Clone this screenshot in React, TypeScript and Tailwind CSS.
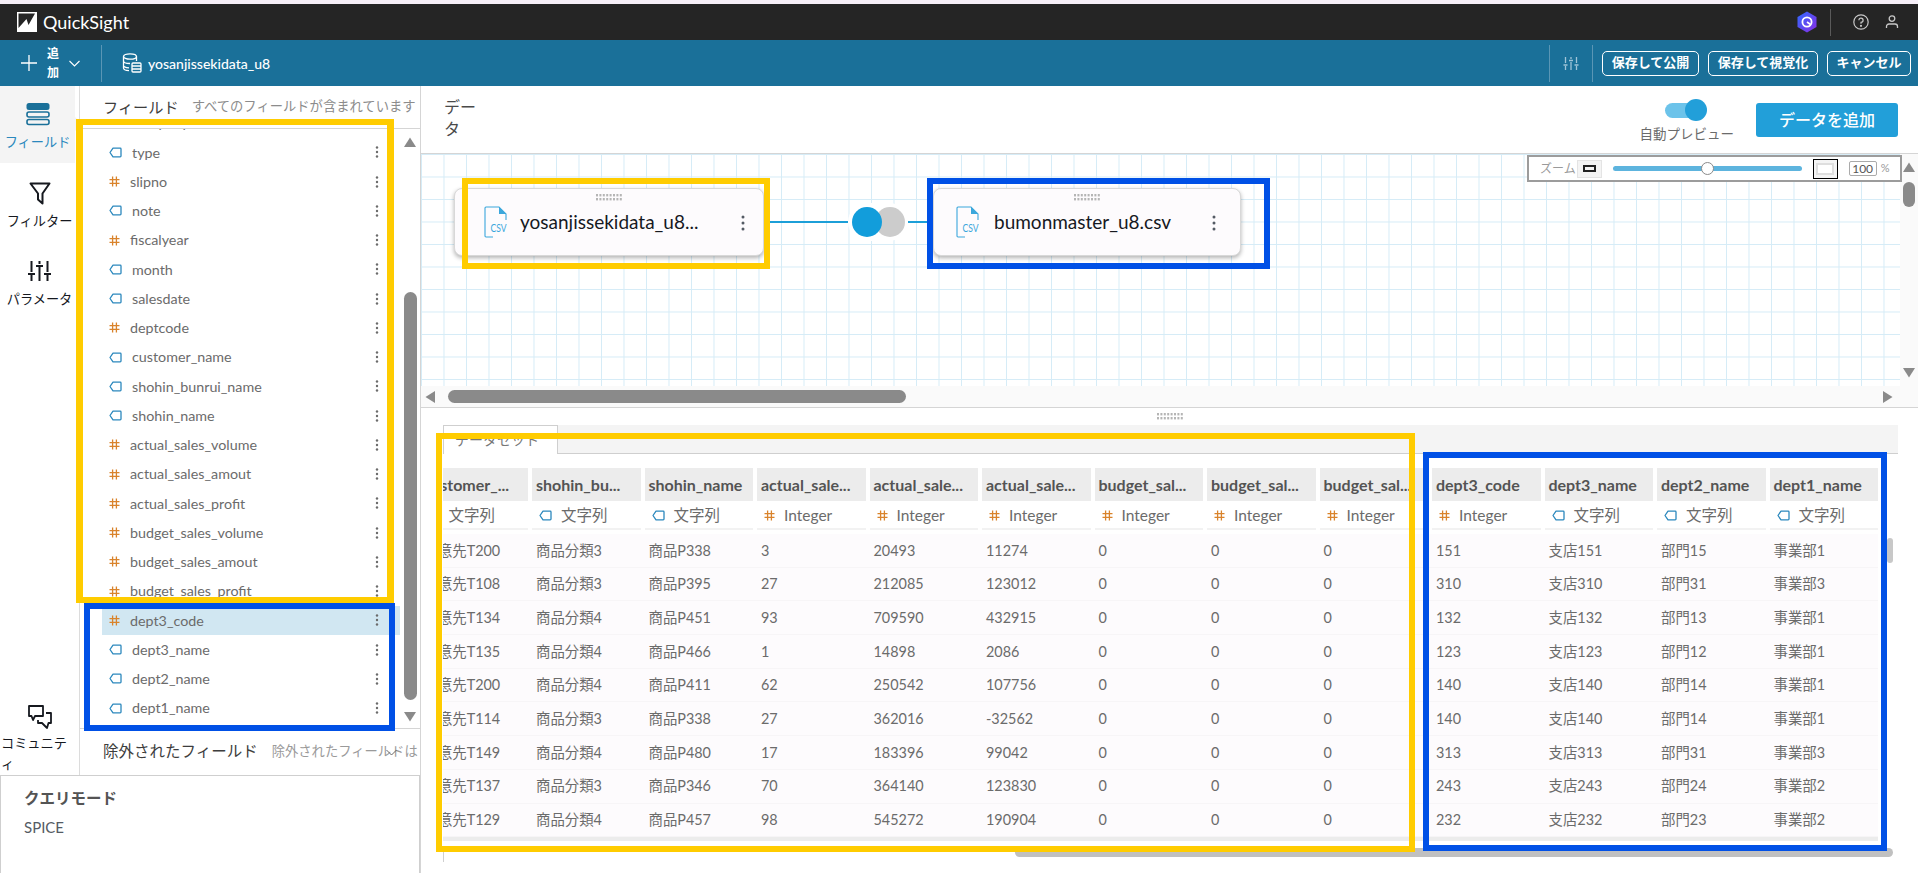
import React from "react";

const fields: [string, "tag" | "num"][] = [
  ["company", "tag"],
  ["type", "tag"],
  ["slipno", "num"],
  ["note", "tag"],
  ["fiscalyear", "num"],
  ["month", "tag"],
  ["salesdate", "tag"],
  ["deptcode", "num"],
  ["customer_name", "tag"],
  ["shohin_bunrui_name", "tag"],
  ["shohin_name", "tag"],
  ["actual_sales_volume", "num"],
  ["actual_sales_amout", "num"],
  ["actual_sales_profit", "num"],
  ["budget_sales_volume", "num"],
  ["budget_sales_amout", "num"],
  ["budget_sales_profit", "num"],
  ["dept3_code", "num"],
  ["dept3_name", "tag"],
  ["dept2_name", "tag"],
  ["dept1_name", "tag"],
];

const columns: [string, "tag" | "num"][] = [
  ["customer_...", "tag"],
  ["shohin_bu...", "tag"],
  ["shohin_name", "tag"],
  ["actual_sale...", "num"],
  ["actual_sale...", "num"],
  ["actual_sale...", "num"],
  ["budget_sal...", "num"],
  ["budget_sal...", "num"],
  ["budget_sal...", "num"],
  ["dept3_code", "num"],
  ["dept3_name", "tag"],
  ["dept2_name", "tag"],
  ["dept1_name", "tag"],
];

const rows = [
  ["得意先T200", "商品分類3", "商品P338", "3", "20493", "11274", "0", "0", "0", "151", "支店151", "部門15", "事業部1"],
  ["得意先T108", "商品分類3", "商品P395", "27", "212085", "123012", "0", "0", "0", "310", "支店310", "部門31", "事業部3"],
  ["得意先T134", "商品分類4", "商品P451", "93", "709590", "432915", "0", "0", "0", "132", "支店132", "部門13", "事業部1"],
  ["得意先T135", "商品分類4", "商品P466", "1", "14898", "2086", "0", "0", "0", "123", "支店123", "部門12", "事業部1"],
  ["得意先T200", "商品分類4", "商品P411", "62", "250542", "107756", "0", "0", "0", "140", "支店140", "部門14", "事業部1"],
  ["得意先T114", "商品分類3", "商品P338", "27", "362016", "-32562", "0", "0", "0", "140", "支店140", "部門14", "事業部1"],
  ["得意先T149", "商品分類4", "商品P480", "17", "183396", "99042", "0", "0", "0", "313", "支店313", "部門31", "事業部3"],
  ["得意先T137", "商品分類3", "商品P346", "70", "364140", "123830", "0", "0", "0", "243", "支店243", "部門24", "事業部2"],
  ["得意先T129", "商品分類4", "商品P457", "98", "545272", "190904", "0", "0", "0", "232", "支店232", "部門23", "事業部2"],
];

function TagIcon() {
  return (
    <svg width="13" height="11" viewBox="0 0 13 11" className="shrink-0" fill="none">
      <path d="M4 1.2 H11.2 A0.8 0.8 0 0 1 12 2 V9 A0.8 0.8 0 0 1 11.2 9.8 H4 L1 5.5 Z" stroke="#2b88bd" strokeWidth="1.3" strokeLinejoin="round" />
    </svg>
  );
}

function HashIcon() {
  return (
    <svg width="11" height="11" viewBox="0 0 11 11" className="shrink-0" fill="none" stroke="#d9832b" strokeWidth="1.3">
      <path d="M3.6 0.5 V10.5 M7.4 0.5 V10.5 M0.5 3.6 H10.5 M0.5 7.4 H10.5" />
    </svg>
  );
}

function TypeIcon({ kind }: { kind: "tag" | "num" }) {
  return kind === "tag" ? <TagIcon /> : <HashIcon />;
}

function Kebab({ color = "#6b6b6b", big = false }: { color?: string; big?: boolean }) {
  return (
    <svg width="4" height={big ? 16 : 12} viewBox={big ? "0 0 4 16" : "0 0 4 12"} fill={color} className="shrink-0">
      {big ? (
        <>
          <circle cx="2" cy="2" r="1.5" />
          <circle cx="2" cy="8" r="1.5" />
          <circle cx="2" cy="14" r="1.5" />
        </>
      ) : (
        <>
          <circle cx="2" cy="1.5" r="1.2" />
          <circle cx="2" cy="6" r="1.2" />
          <circle cx="2" cy="10.5" r="1.2" />
        </>
      )}
    </svg>
  );
}

function Tri({ className }: { className?: string }) {
  return (
    <svg width="12" height="10" viewBox="0 0 12 10" className={className} fill="#8a8a8a">
      <path d="M6 0.5 L12 10 H0 Z" />
    </svg>
  );
}

function DragDots() {
  const dots = [];
  for (let y = 0; y < 2; y++) {
    for (let x = 0; x < 8; x++) {
      dots.push(<rect key={`${x}-${y}`} x={x * 3.4} y={y * 4} width="2" height="2.4" />);
    }
  }
  return (
    <svg width="26" height="7" viewBox="0 0 26 7" fill="#b5b5b5">
      {dots}
    </svg>
  );
}

function CsvIcon() {
  return (
    <svg width="24" height="32" viewBox="0 0 24 32" fill="none" className="shrink-0">
      <path d="M9 31 H2 A1 1 0 0 1 1 30 V2 A1 1 0 0 1 2 1 H15 L22 8 V14" stroke="#3ba7dc" strokeWidth="1.1" />
      <path d="M15 1 V8 H22 Z" fill="#3ba7dc" />
      <text x="6.5" y="26" fontSize="12" fill="#3ba7dc" fontFamily="Lato, sans-serif" textLength="16" lengthAdjust="spacingAndGlyphs">CSV</text>
    </svg>
  );
}

function NodeCard({ name, className, menuClass, rowClass }: { name: string; className: string; menuClass: string; rowClass: string }) {
  return (
    <div className={`absolute top-[34px] h-[68px] rounded-lg bg-[#fdfbfd] border border-[#d8d8d8] shadow-[0_2px_4px_rgba(0,0,0,0.3)] ${className}`}>
      <div className="absolute left-0 right-0 top-[5px] flex justify-center">
        <DragDots />
      </div>
      <div className="flex h-full items-center">
        <div className={`flex items-center ${rowClass}`}>
          <CsvIcon />
          <span className="text-[19px] text-[#16191f] whitespace-nowrap">{name}</span>
        </div>
        <div className={`absolute top-[26px] ${menuClass}`}>
          <Kebab big color="#545b64" />
        </div>
      </div>
    </div>
  );
}

function NavItem({ label, active, icon, className }: { label: string; active?: boolean; icon: React.ReactNode; className?: string }) {
  return (
    <div className={`flex flex-col items-center ${className ?? ""}`}>
      <div className="flex h-[24px] items-center justify-center">{icon}</div>
      <div className={`mt-[6px] text-[13.2px] leading-[21px] text-center ${active ? "text-[#2b88bd]" : "text-[#16191f]"}`}>{label}</div>
    </div>
  );
}

function App() {
  return (
    <div className="relative h-[873px] w-[1918px] overflow-hidden bg-white font-['Lato','Noto_Sans_CJK_JP',sans-serif] text-[14px] text-[#6b6b6b]">
      <div className="h-[4px] bg-[#f6eff8]" />

      {/* top bar */}
      <div className="flex h-[36px] items-center bg-[#252525] text-white">
        <svg width="20" height="20" viewBox="0 0 20 20" className="ml-[17px]">
          <rect width="20" height="20" fill="#fff" />
          <path d="M1.5 1.5 H18 L11.5 13 L9.5 7 L1.5 16 Z" fill="#252525" />
        </svg>
        <span className="ml-[6px] text-[18px] leading-none">QuickSight</span>
        <div className="ml-auto flex items-center">
          <svg width="20" height="22" viewBox="0 0 20 22">
            <defs>
              <linearGradient id="hexg" x1="0" y1="0" x2="1" y2="1">
                <stop offset="0" stopColor="#2f6bff" />
                <stop offset="1" stopColor="#8a2be2" />
              </linearGradient>
            </defs>
            <path d="M10 0.5 L19.5 6 V16 L10 21.5 L0.5 16 V6 Z" fill="url(#hexg)" />
            <circle cx="10" cy="11" r="4.6" fill="none" stroke="#fff" strokeWidth="1.8" />
            <path d="M10 11 L13.5 13.5" stroke="#fff" strokeWidth="1.6" />
          </svg>
          <div className="ml-[13px] h-[27px] w-px bg-[#5a5a5a]" />
          <svg width="16" height="16" viewBox="0 0 16 16" fill="none" stroke="#c8c8c8" strokeWidth="1.2" className="ml-[22px]">
            <circle cx="8" cy="8" r="7.2" />
            <path d="M5.9 6.2 A2.1 2.1 0 1 1 8 8.4 V9.8" />
            <circle cx="8" cy="11.8" r="0.5" fill="#c8c8c8" />
          </svg>
          <svg width="14" height="14" viewBox="0 0 14 14" fill="none" stroke="#c8c8c8" strokeWidth="1.3" className="ml-[16px] mr-[19px]">
            <circle cx="7" cy="3.6" r="2.8" />
            <path d="M1.5 13 V11.5 A2.5 2.5 0 0 1 4 9 H10 A2.5 2.5 0 0 1 12.5 11.5 V13" />
          </svg>
        </div>
      </div>

      {/* teal toolbar */}
      <div className="flex h-[46px] items-center bg-[#1a7099] text-white">
        <svg width="16" height="16" viewBox="0 0 16 16" stroke="#fff" strokeWidth="1.3" className="ml-[21px]">
          <path d="M8 0 V16 M0 8 H16" />
        </svg>
        <div className="ml-[10px] w-[12px] text-center text-[12px] font-bold leading-[19px]">追加</div>
        <svg width="11" height="7" viewBox="0 0 11 7" fill="none" stroke="#fff" strokeWidth="1.1" className="ml-[10px]">
          <path d="M0.5 1 L5.5 6 L10.5 1" />
        </svg>
        <div className="ml-[21px] h-[37px] w-px bg-[#5a96b5]" />
        <svg width="20" height="20" viewBox="0 0 20 20" fill="none" stroke="#fff" strokeWidth="1.3" className="ml-[20px]">
          <ellipse cx="8" cy="3.5" rx="6.5" ry="2.7" />
          <path d="M1.5 3.5 V15 C1.5 16.5 4 17.5 7 17.6 M14.5 3.5 V8 M1.5 8 C1.5 9.5 4 10.5 8 10.5 M1.5 12.5 C1.5 13.8 3.5 14.6 7 14.8" />
          <rect x="10" y="10" width="9" height="9" rx="1" />
          <path d="M10 13 H19 M10 16 H19" />
        </svg>
        <span className="ml-[6px] text-[14px] font-medium">yosanjissekidata_u8</span>
        <div className="ml-auto flex items-center">
          <div className="h-[37px] w-px bg-[#5a96b5]" />
          <svg width="16" height="13" viewBox="0 0 16 13" stroke="#9fc4d8" strokeWidth="1.3" className="ml-[13px]">
            <path d="M2.5 0 V6 M2.5 9 V13 M8 0 V2 M8 5 V13 M13.5 0 V6 M13.5 9 V13 M0.5 8 H4.5 M6 3.5 H10 M11.5 8 H15.5" />
          </svg>
          <div className="ml-[13px] h-[37px] w-px bg-[#5a96b5]" />
          <div className="ml-[9px] flex h-[25px] w-[97px] items-center justify-center rounded-[5px] border border-white text-[13px] font-bold">保存して公開</div>
          <div className="ml-[9px] flex h-[25px] w-[110px] items-center justify-center rounded-[5px] border border-white text-[13px] font-bold">保存して視覚化</div>
          <div className="ml-[9px] mr-[7px] flex h-[25px] w-[84px] items-center justify-center rounded-[5px] border border-white text-[13px] font-bold">キャンセル</div>
        </div>
      </div>

      {/* body */}
      <div className="flex h-[787px]">
        <div className="flex w-[420px] shrink-0 flex-col">
          <div className="flex h-[689px]">
            {/* nav */}
            <nav className="relative flex w-[80px] shrink-0 flex-col border-r border-[#dcdcdc]">
              <div className="relative h-[77px] w-[75px] bg-[#f4f4f4] pt-[16px]">
                <NavItem
                  label="フィールド"
                  active
                  icon={
                    <svg width="24" height="24" viewBox="0 0 24 24" fill="none">
                      <rect x="0.5" y="1" width="23" height="7" rx="2.5" fill="#1a7099" />
                      <rect x="1" y="10" width="22" height="5" rx="2" stroke="#1a7099" strokeWidth="1.6" />
                      <rect x="1" y="17.5" width="22" height="5" rx="2" stroke="#1a7099" strokeWidth="1.6" />
                    </svg>
                  }
                />
                <div className="absolute right-[-5px] top-[33px] h-[10px] w-[10px] rotate-45 bg-[#f4f4f4]" />
              </div>
              <NavItem
                className="mt-[18px]"
                label="フィルター"
                icon={
                  <svg width="22" height="23" viewBox="0 0 22 23" fill="none" stroke="#16191f" strokeWidth="2">
                    <path d="M1.5 1.5 H20.5 L13.5 11.5 V21.5 L9 17.5 V11.5 Z" strokeLinejoin="round" />
                  </svg>
                }
              />
              <NavItem
                className="mt-[27px]"
                label="パラメータ"
                icon={
                  <svg width="23" height="20" viewBox="0 0 23 20" stroke="#16191f" strokeWidth="2">
                    <path d="M3.5 0 V11 M3.5 14 V20 M11.5 0 V3 M11.5 6 V20 M19.5 0 V11 M19.5 14 V20 M0 13 H7 M8 5 H15 M16 13 H23" />
                  </svg>
                }
              />
              <div className="mt-auto flex flex-col items-center">
                <svg width="24" height="24" viewBox="0 0 24 24" fill="none" stroke="#16191f" strokeWidth="1.8" strokeLinejoin="round">
                  <path d="M1 1 H15 V11 H7 L5 15 L3.5 11 H1 Z" />
                  <path d="M18 8 H23 V18 H20.5 L19 23 L14 18 H10 V15" />
                </svg>
                <div className="mt-[4px] w-[79px] pl-[1px] text-[13.2px] leading-[21px] text-[#16191f]">
                  コミュニテ
                  <br />ィ
                </div>
              </div>
            </nav>

            {/* fields panel */}
            <div className="flex w-[340px] flex-col">
              <div className="flex h-[43px] shrink-0 items-center overflow-hidden whitespace-nowrap border-b border-[#d5d5d5] pl-[23px]">
                <span className="text-[15.2px] text-[#3d3d3d]">フィールド</span>
                <span className="ml-[13px] text-[13.3px] text-[#8c8c8c]">すべてのフィールドが含まれています</span>
              </div>
              <div className="flex h-[599px] shrink-0">
                <div className="h-full w-[320px] overflow-hidden">
                  <div className="-mt-[20.6px] pl-[22px]">
                    {fields.map(([name, kind]) => (
                      <div key={name} className={`flex h-[29.25px] items-center pl-[7px] pr-[21px] ${name === "dept3_code" ? "bg-[#d1e7f2]" : ""}`}>
                        <TypeIcon kind={kind} />
                        <span className="ml-[10px] flex-1 text-[14.3px]">{name}</span>
                        <Kebab />
                      </div>
                    ))}
                  </div>
                </div>
                <div className="flex w-[20px] flex-col items-center pt-[8px]">
                  <Tri />
                  <div className="mt-[145px] h-[408px] w-[13px] rounded-full bg-[#8a8a8a]" />
                  <Tri className="mt-[12px] rotate-180" />
                </div>
              </div>
              <div className="flex h-[47px] items-center overflow-hidden whitespace-nowrap border-t border-[#d5d5d5] pl-[23px]">
                <span className="text-[15.5px] text-[#3d3d3d]">除外されたフィールド</span>
                <span className="ml-[14px] text-[13.3px] text-[#9a9a9a]">除外されたフィールドは</span>
              </div>
            </div>
          </div>
          <div className="h-[98px] border-l border-r border-t border-[#cfcfcf] pl-[23px] pt-[11px]">
            <div className="text-[15.5px] font-bold leading-[22px] text-[#545454]">クエリモード</div>
            <div className="mt-[8px] text-[15px] leading-[20px] text-[#545b64]">SPICE</div>
          </div>
        </div>

        {/* main */}
        <div className="flex min-w-0 flex-1 flex-col border-l border-[#d5d5d5]">
          <div className="flex h-[68px] shrink-0 items-start border-b border-[#d5d5d5]">
            <div className="ml-[23px] mt-[10px] w-[40px] text-[16px] leading-[22px] text-[#4a4a4a]">データ</div>
            <div className="ml-auto mt-[17px] flex flex-col items-center">
              <div className="relative mr-[7px] h-[15px] w-[37px] rounded-full bg-[#6cc3ea]">
                <div className="absolute right-[-5px] top-[-4px] h-[22px] w-[22px] rounded-full bg-[#229fd9]" />
              </div>
              <div className="mt-[7px] text-[13.5px] leading-[18px] text-[#6b6b6b]">自動プレビュー</div>
            </div>
            <div className="ml-[22px] mr-[20px] mt-[17px] flex h-[34px] w-[142px] items-center justify-center rounded-[3px] bg-[#229fd9] text-[16px] font-medium text-white">データを追加</div>
          </div>

          {/* canvas */}
          <div className="relative flex h-[232px] shrink-0">
            <div className="relative flex-1 bg-[linear-gradient(to_right,#d6ecf7_1px,transparent_1px),linear-gradient(to_bottom,#d6ecf7_1px,transparent_1px)] bg-[size:22.5px_22.5px]">
              <NodeCard name="yosanjissekidata_u8..." className="left-[33px] w-[310px]" menuClass="left-[286px]" rowClass="ml-[29px] gap-[12px]" />
              <div className="absolute left-[343px] top-[67px] h-[2px] w-[84px] bg-[#1c9fd8]" />
              <div className="absolute left-[487px] top-[67px] h-[2px] w-[25px] bg-[#1c9fd8]" />
              <div className="absolute left-[427px] top-[49px] h-[38px] w-[60px] rounded-full bg-white" />
              <div className="absolute left-[454px] top-[53px] h-[30px] w-[30px] rounded-full bg-[#cccccc]" />
              <div className="absolute left-[431px] top-[53px] h-[30px] w-[30px] rounded-full bg-[#129ddb]" />
              <NodeCard name="bumonmaster_u8.csv" className="left-[512px] w-[308px]" menuClass="left-[278px]" rowClass="ml-[22px] gap-[14px]" />
            </div>
            <div className="flex w-[18px] shrink-0 flex-col items-center bg-[#fafafa] pt-[8px]">
              <Tri />
              <div className="mt-[10px] h-[25px] w-[12px] rounded-full bg-[#8a8a8a]" />
              <Tri className="mt-[161px] rotate-180" />
            </div>
            <div className="absolute right-[16px] top-[1px] flex h-[27px] w-[375px] items-center border-2 border-[#9c9c9c] bg-white">
              <span className="ml-[11px] text-[12px] text-[#9a9a9a]">ズーム</span>
              <div className="ml-[1px] flex h-[18px] w-[25px] items-center justify-center border border-[#e4e4e4] bg-[#f4f4f4]">
                <div className="h-[7px] w-[13px] border-2 border-[#222]" />
              </div>
              <div className="relative ml-[11px] h-[5px] w-[189px] rounded-full bg-[#5db4de]">
                <div className="absolute left-[88px] top-[-4px] h-[13px] w-[13px] rounded-full border border-[#8a8a8a] bg-white" />
              </div>
              <div className="ml-[11px] flex h-[20px] w-[25px] items-center justify-center border border-black bg-[#f4f4f4]">
                <div className="h-[12px] w-[18px] border-2 border-[#dedede] bg-white" />
              </div>
              <div className="ml-[11px] flex h-[15px] w-[28px] items-center justify-center rounded-[2px] border border-[#aaa] text-[12px] text-[#555]">100</div>
              <span className="ml-[4px] text-[11px] text-[#999]">%</span>
            </div>
          </div>

          {/* horizontal scrollbar */}
          <div className="flex h-[22px] shrink-0 items-center border-b border-[#d5d5d5] bg-[#fafafa]">
            <Tri className="ml-[3px] -rotate-90" />
            <div className="ml-[12px] h-[13px] w-[458px] rounded-full bg-[#8a8a8a]" />
            <Tri className="ml-auto mr-[24px] rotate-90" />
          </div>

          {/* dataset panel */}
          <div className="relative flex min-h-0 flex-1 flex-col">
            <div className="flex h-[17px] shrink-0 items-center justify-center">
              <DragDots />
            </div>
            <div className="ml-[22px] mr-[20px] flex h-[29px] shrink-0 border-b border-[#cfcfcf] bg-[#f4f4f4]">
              <div className="-mb-px w-[115px] border border-b-0 border-[#cfcfcf] bg-white pl-[11px] pt-[5px] text-[14px] leading-[18px] text-[#777]">データセット</div>
            </div>
            <div className="ml-[22px] mt-[14px] w-[1455px] overflow-hidden">
              <div className="-ml-[23.5px] grid w-max grid-cols-[repeat(13,108.5px)] gap-x-[4px]">
                {columns.map(([name], i) => (
                  <div key={i} className="flex h-[33px] items-center overflow-hidden whitespace-nowrap bg-[#ececec] px-[4px]">
                    <span className="text-[16px] font-bold text-[#545454]">{name}</span>
                  </div>
                ))}
                {columns.map(([, kind], i) => (
                  <div key={i} className="flex h-[29px] items-center gap-[9px] border-b-2 border-[#f2f2f2] pl-[7px] pt-[2px]">
                    <TypeIcon kind={kind} />
                    <span className="text-[15.5px] text-[#6b6b6b]">{kind === "tag" ? "文字列" : "Integer"}</span>
                  </div>
                ))}
              </div>
              <div className="-ml-[23.5px] mt-[4px] w-max border-b-4 border-[#ececec] bg-[#fdfbfd]">
                {rows.map((row, i) => (
                  <div key={i} className="grid h-[33.7px] grid-cols-[repeat(13,108.5px)] items-center gap-x-[4px] border-b border-[#f7f5f7]">
                    {row.map((cell, j) => (
                      <div key={j} className="whitespace-nowrap px-[4px] text-[14.4px] text-[#6b6b6b]">
                        {cell}
                      </div>
                    ))}
                  </div>
                ))}
              </div>
            </div>
            <div className="ml-[594px] mt-[7px] h-[9px] w-[878px] rounded-full bg-[#c0c0c0]" />
            <div className="absolute left-[1466px] top-[130px] h-[25px] w-[6px] rounded-full bg-[#c8c8c8]" />
            <div className="absolute bottom-[11px] left-[22px] h-[12px] w-px bg-[#cfcfcf]" />
          </div>
        </div>
      </div>

      {/* chevron on the excluded-fields row */}
      <svg width="11" height="7" viewBox="0 0 11 7" fill="none" stroke="#666" strokeWidth="1" className="absolute left-[386px] top-[749px]">
        <path d="M0.5 1 L5.5 6 L10.5 1" />
      </svg>

      {/* annotation boxes */}
      <div className="absolute left-[76px] top-[119px] h-[484px] w-[318px] border-x-[7px] border-y-[6px] border-[#ffcc00]" />
      <div className="absolute left-[84px] top-[603px] h-[128px] w-[311px] border-[6px] border-[#0050e6]" />
      <div className="absolute left-[462px] top-[178px] h-[91px] w-[308px] border-[6px] border-[#ffcc00]" />
      <div className="absolute left-[927px] top-[178px] h-[91px] w-[343px] border-[6px] border-[#0050e6]" />
      <div className="absolute left-[436px] top-[433px] h-[419px] w-[979px] border-[6px] border-[#ffcc00]" />
      <div className="absolute left-[1423px] top-[452px] h-[399px] w-[464px] border-[6px] border-[#0050e6]" />
    </div>
  );
}

export default App;
